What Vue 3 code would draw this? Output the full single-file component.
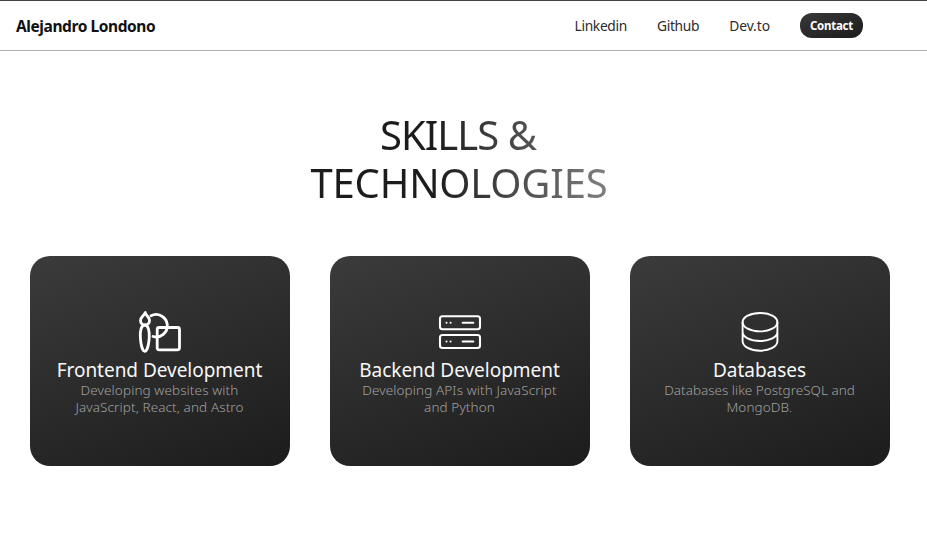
<script setup>
const links = ['Linkedin', 'Github', 'Dev.to']
const skills = [
  { id: 'frontend', title: 'Frontend Development', lines: ['Developing websites with', 'JavaScript, React, and Astro'] },
  { id: 'backend', title: 'Backend Development', lines: ['Developing APIs with JavaScript', 'and Python'] },
  { id: 'data', title: 'Databases', lines: ['Databases like PostgreSQL and', 'MongoDB.'] },
]
</script>

<template>
  <div class="page">
    <header class="bar">
      <span class="brand">Alejandro Londono</span>
      <nav class="nav">
        <a v-for="l in links" :key="l" :class="['link', l.slice(0, 3).toLowerCase()]">{{ l }}</a>
        <a class="contact">Contact</a>
      </nav>
    </header>
    <h1 class="heading"><span class="first">SKILLS &amp;</span><br />TECHNOLOGIES</h1>
    <section class="cards">
      <article v-for="s in skills" :key="s.id" :class="['card', s.id]">
        <svg v-if="s.id === 'frontend'" class="icon" viewBox="0 0 48 48" stroke-width="2.8">
          <path d="M9.300 4.500C8.300 7.500 4.500 9 4.500 12.500C4.500 15 6.300 17 9 17S13.500 15 13.500 12.500C13.500 9 10.100 8 9.300 4.500Z" />
          <path d="M8.800 17C5.100 17 3.900 23 4.400 30C4.800 36 6.500 43.300 8.800 43.300S12.800 36 13.200 30C13.600 23 12.300 17 8.800 17Z" />
          <path d="M15 7.800A11.200 11.200 0 1 1 17 28.500" />
          <rect x="21.200" y="19.500" width="22.300" height="22.300" rx="2" />
        </svg>
        <svg v-else-if="s.id === 'backend'" class="icon" viewBox="0 0 48 48" stroke-width="2.1">
          <rect x="4" y="8.300" width="40" height="13" rx="2.500" />
          <rect x="4" y="27" width="40" height="13" rx="2.500" />
          <path d="M26.700 14.800H37.300M26.700 33.500H37.300M10.500 14.800H10.510M14.600 14.800H14.610M10.500 33.500H10.510M14.600 33.500H14.610" />
        </svg>
        <svg v-else class="icon" viewBox="0 0 48 48" stroke-width="1.9">
          <ellipse cx="24" cy="14.200" rx="17.400" ry="9.200" />
          <path d="M6.600 14.200V33.300C6.600 38.500 14.300 42.700 24 42.700S41.400 38.500 41.400 33.300V14.200M6.600 24C6.600 29 14.300 33 24 33S41.400 29 41.400 24" />
        </svg>
        <h2 class="title">{{ s.title }}</h2>
        <p class="text"><span v-for="(t, i) in s.lines" :key="t" :class="['line', 'n' + i]">{{ t }}</span></p>
      </article>
    </section>
  </div>
</template>

<style>
body { background: #fff; overflow: hidden; }
</style>
<style scoped>
.page { height: 553px; font-family: "Noto Sans", sans-serif; border-top: 1px solid #414141; box-sizing: border-box; }
.bar { height: 50px; box-sizing: border-box; border-bottom: 1px solid #b0b0b0; display: flex; justify-content: space-between; align-items: center; padding: 0 64px 0 16px; }
.brand { font-size: 15.500px; font-weight: 700; color: #111; line-height: 22px; padding-top: 1px; letter-spacing: -.42px; white-space: nowrap; }
.nav { display: flex; align-items: center; gap: 30px; }
.link { font-size: 13.800px; line-height: 20px; color: #2b2b2b; padding-top: 1px; letter-spacing: -.32px; }
.dev { letter-spacing: -.04px; }
.contact { width: 63px; height: 25px; box-sizing: border-box; border-radius: 12px; background: linear-gradient(160deg, #383838, #1c1c1c); color: #fff; font-size: 11.500px; font-weight: 700; line-height: 25px; text-align: center; letter-spacing: -.26px; }
.heading { width: 300px; margin: 60px 0 0 309px; font-size: 40px; line-height: 48px; font-weight: 400; text-align: center; white-space: nowrap; letter-spacing: -.2px; color: transparent; background: linear-gradient(90deg, #1c1c1c 0%, #1c1c1c 42%, #808080 100%); background-clip: text; -webkit-background-clip: text; }
.first { letter-spacing: -1px; margin-right: 2px; }
.cards { display: flex; gap: 40px; margin: 49px 0 0 30px; }
.card { width: 260px; height: 210px; flex: none; box-sizing: border-box; border-radius: 20px; background: linear-gradient(160deg, #3b3b3b, #1c1c1c); display: flex; flex-direction: column; align-items: center; padding-top: 52px; }
.icon { width: 48px; height: 48px; flex: none; fill: none; stroke: #fff; stroke-linecap: round; stroke-linejoin: round; }
.title { margin: 2px 0 0; font-size: 19px; line-height: 24px; font-weight: 400; color: #f7f7f7; white-space: nowrap; letter-spacing: -.03px; padding-right: 1px; }
.text { margin: 0; font-size: 13.500px; line-height: 17px; font-weight: 300; color: #a0a0a0; text-align: center; white-space: nowrap; letter-spacing: .11px; padding-right: 1px; }
.data .n0 { letter-spacing: 0; }
.line { display: block; }
</style>
